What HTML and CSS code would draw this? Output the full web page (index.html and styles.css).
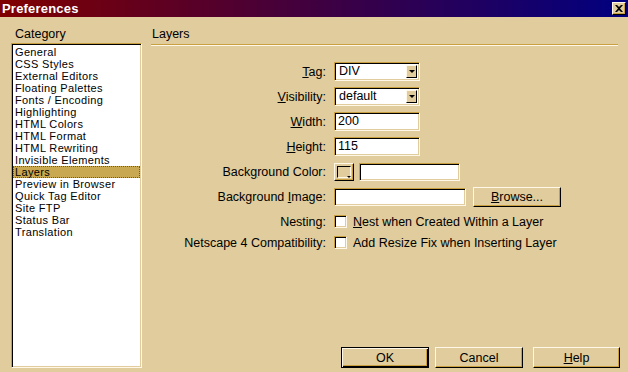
FILE: index.html
```html
<!DOCTYPE html>
<html lang="en">
<head>
  <meta charset="UTF-8">
  <title>Preferences</title>
  <link rel="stylesheet" href="styles.css">
</head>
<body>
  <div class="window">
    <div class="titlebar">
      <span class="title">Preferences</span>
      <span class="close-btn">
        <svg width="8" height="7" viewBox="0 0 8 7"><path d="M0 0h2l2 2 2-2h2L5 3.5 8 7H6L4 5 2 7H0l3-3.5z" fill="#000"/></svg>
      </span>
    </div>

    <div class="content">
      <div class="category">
        <div class="category-label">Category</div>
        <ul class="listbox">
          <li>General</li>
          <li>CSS Styles</li>
          <li>External Editors</li>
          <li>Floating Palettes</li>
          <li>Fonts / Encoding</li>
          <li>Highlighting</li>
          <li>HTML Colors</li>
          <li>HTML Format</li>
          <li>HTML Rewriting</li>
          <li>Invisible Elements</li>
          <li class="selected">Layers</li>
          <li>Preview in Browser</li>
          <li>Quick Tag Editor</li>
          <li>Site FTP</li>
          <li>Status Bar</li>
          <li>Translation</li>
        </ul>
      </div>

      <div class="panel">
        <div class="panel-title">Layers</div>

        <div class="form">
          <div class="row">
            <span class="label"><u>T</u>ag:</span>
            <span class="select"><span class="value">DIV</span><span class="arrow"></span></span>
          </div>
          <div class="row">
            <span class="label"><u>V</u>isibility:</span>
            <span class="select"><span class="value">default</span><span class="arrow"></span></span>
          </div>
          <div class="row">
            <span class="label"><u>W</u>idth:</span>
            <span class="field short">200</span>
          </div>
          <div class="row">
            <span class="label"><u>H</u>eight:</span>
            <span class="field short">115</span>
          </div>
          <div class="row">
            <span class="label">Back<u>g</u>round Color:</span>
            <span class="controls">
              <span class="swatch"><span class="swatch-box"></span><span class="swatch-arrow"></span></span>
              <span class="field color"></span>
            </span>
          </div>
          <div class="row">
            <span class="label">Background <u>I</u>mage:</span>
            <span class="controls">
              <span class="field image"></span>
              <span class="button browse"><u>B</u>rowse...</span>
            </span>
          </div>
          <div class="row check-row first-check">
            <span class="label">Nesting:</span>
            <span class="controls"><span class="checkbox"></span><span class="check-text"><u>N</u>est when Created Within a Layer</span></span>
          </div>
          <div class="row check-row">
            <span class="label">Netscape 4 Compatibility:</span>
            <span class="controls"><span class="checkbox"></span><span class="check-text">Add Resize Fix when Inserting Layer</span></span>
          </div>
        </div>

        <div class="footer">
          <span class="button default">OK</span>
          <span class="button cancel">Cancel</span>
          <span class="button help"><u>H</u>elp</span>
        </div>
      </div>
    </div>
  </div>
</body>
</html>
```

FILE: styles.css
```css
body {
  margin: 0;
  font-family: "Liberation Sans", Arial, sans-serif;
  font-size: 12px;
  color: #000;
  background: #e0cc9c;
}

.window {
  width: 628px;
  height: 372px;
  display: flex;
  flex-direction: column;
  background: #e0cc9c;
  overflow: hidden;
}

.titlebar {
  height: 17px;
  display: flex;
  align-items: center;
  justify-content: space-between;
  padding: 0 2px 0 2px;
  background: linear-gradient(to right, #800000, #000080);
}

.title {
  color: #fff;
  font-weight: bold;
  font-size: 13px;
  letter-spacing: 0.2px;
}

.close-btn {
  width: 12px;
  height: 11px;
  display: flex;
  align-items: center;
  justify-content: center;
  background: #e0cc9c;
  border: 1px solid;
  border-color: #fff8e8 #000 #000 #fff8e8;
  box-shadow: inset -1px -1px #c8a040;
}

.content {
  flex: 1;
  display: flex;
  padding: 9px 0 4px 11px;
}

.category {
  width: 131px;
  display: flex;
  flex-direction: column;
}

.category-label {
  height: 16px;
  line-height: 16px;
  padding-left: 4px;
  font-size: 12.5px;
  margin-bottom: 1px;
}

.listbox {
  flex: 1;
  margin: 0;
  padding: 0;
  list-style: none;
  background: #fff;
  border: 1px solid;
  border-color: #c8a040 #fff8e8 #fff8e8 #c8a040;
  box-shadow: inset 1px 1px #000, inset -1px -1px #e0cc9c;
}

.listbox li {
  box-sizing: border-box;
  height: 12px;
  line-height: 12px;
  padding-left: 1px;
  margin: 0 1px 0 1px;
  font-size: 11px;
  letter-spacing: 0.35px;
  white-space: nowrap;
  border: 1px dotted transparent;
  border-width: 0 1px;
}

.listbox li:first-child {
  margin-top: 2px;
}

.listbox li.selected {
  background: #c8a850;
  border-width: 1px;
  line-height: 10px;
  border-color: #4a5a90;
}

.panel {
  flex: 1;
  margin-left: 9px;
  display: flex;
  flex-direction: column;
}

.panel-title {
  height: 18px;
  line-height: 16px;
  padding-left: 1px;
  margin-right: 10px;
  font-size: 12.5px;
  border-bottom: 1px solid #c8a040;
  box-shadow: 0 1px #fff8e8;
}

.form {
  margin-top: 14px;
  display: flex;
  flex-direction: column;
}

.row {
  height: 25px;
  display: grid;
  grid-template-columns: 175px 1fr;
  column-gap: 8px;
  align-items: center;
}

.row.check-row {
  height: 21px;
}

.row.first-check {
  margin-top: 2px;
}

.label {
  text-align: right;
  font-size: 12.5px;
  white-space: nowrap;
}

.controls {
  display: flex;
  align-items: center;
}

.select,
.field {
  box-sizing: border-box;
  height: 19px;
  background: #fff;
  border: 1px solid;
  border-color: #c8a040 #fff8e8 #fff8e8 #c8a040;
  box-shadow: inset 1px 1px #000, inset -1px -1px #e0cc9c;
  font-size: 12.5px;
  line-height: 17px;
  padding-left: 3px;
}

.select {
  width: 86px;
  display: flex;
  justify-content: space-between;
  padding-right: 2px;
}

.select .value {
  padding-left: 1px;
}

.select .arrow {
  width: 11px;
  height: 13px;
  margin-top: 2px;
  background: #e0cc9c;
  border: 1px solid;
  border-color: #fff8e8 #000 #000 #fff8e8;
  box-sizing: border-box;
  position: relative;
}

.select .arrow::after {
  content: "";
  position: absolute;
  left: 2px;
  top: 4px;
  border-left: 3px solid transparent;
  border-right: 3px solid transparent;
  border-top: 3px solid #000;
}

.field.short {
  width: 86px;
}

.field.color {
  width: 101px;
  height: 18px;
  margin-left: 5px;
}

.field.image {
  width: 132px;
  height: 18px;
}

.swatch {
  box-sizing: border-box;
  width: 20px;
  height: 18px;
  border: 1px solid;
  border-color: #fff8e8 #000 #000 #fff8e8;
  box-shadow: inset -1px -1px #c8a040;
  position: relative;
}

.swatch-box {
  position: absolute;
  left: 2px;
  top: 2px;
  width: 12px;
  height: 10px;
  border: 1px solid;
  border-color: #000 #fff8e8 #fff8e8 #000;
}

.swatch-arrow {
  position: absolute;
  right: 2px;
  bottom: 2px;
  border-left: 2px solid transparent;
  border-right: 2px solid transparent;
  border-top: 2px solid #000;
}

.button {
  box-sizing: border-box;
  display: inline-flex;
  align-items: center;
  justify-content: center;
  width: 88px;
  height: 21px;
  font-size: 12.5px;
  background: #e0cc9c;
  border: 1px solid;
  border-color: #fff8e8 #000 #000 #fff8e8;
  box-shadow: inset -1px -1px #c8a040;
}

.browse {
  height: 20px;
  margin-left: 7px;
}

.checkbox {
  box-sizing: border-box;
  width: 13px;
  height: 13px;
  background: #fff;
  border: 1px solid;
  border-color: #c8a040 #fff8e8 #fff8e8 #c8a040;
  box-shadow: inset 1px 1px #000, inset -1px -1px #e0cc9c;
}

.check-text {
  margin-left: 6px;
  font-size: 12.5px;
  white-space: nowrap;
}

.footer {
  margin-top: auto;
  display: flex;
  justify-content: flex-end;
  padding-right: 8px;
}

.button.default {
  border: 1px solid #000;
  box-shadow: inset 1px 1px #fff8e8, inset -1px -1px #000, inset -2px -2px #c8a040;
}

.button.cancel {
  margin-left: 6px;
}

.button.help {
  width: 87px;
  margin-left: 10px;
}
```
